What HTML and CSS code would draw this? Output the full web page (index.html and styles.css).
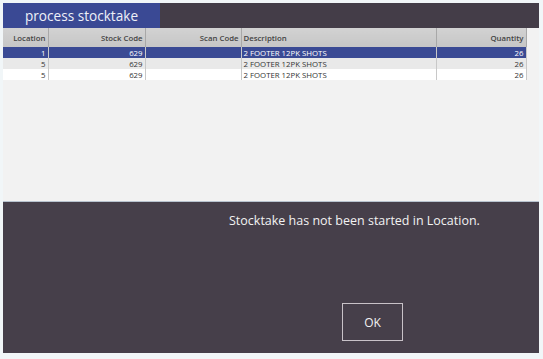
FILE: index.html
```html
<!DOCTYPE html>
<html lang="en">
<head>
    <meta charset="UTF-8">
    <meta name="viewport" content="width=device-width, initial-scale=1.0">
    <title>process stocktake</title>
    <link rel="stylesheet" href="styles.css">
</head>
<body>
    <div class="window">
        <div class="topbar">
            <div class="tab">process stocktake</div>
        </div>

        <div class="grid-area">
            <table class="grid">
                <colgroup>
                    <col class="c-loc">
                    <col class="c-stock">
                    <col class="c-scan">
                    <col class="c-desc">
                    <col class="c-qty">
                </colgroup>
                <thead>
                    <tr>
                        <th class="num">Location</th>
                        <th class="num">Stock Code</th>
                        <th class="num">Scan Code</th>
                        <th>Description</th>
                        <th class="num">Quantity</th>
                    </tr>
                </thead>
                <tbody>
                    <tr class="selected">
                        <td class="num">1</td>
                        <td class="num">629</td>
                        <td class="num"></td>
                        <td>2 FOOTER 12PK SHOTS</td>
                        <td class="num">26</td>
                    </tr>
                    <tr class="alt">
                        <td class="num">5</td>
                        <td class="num">629</td>
                        <td class="num"></td>
                        <td>2 FOOTER 12PK SHOTS</td>
                        <td class="num">26</td>
                    </tr>
                    <tr>
                        <td class="num">5</td>
                        <td class="num">629</td>
                        <td class="num"></td>
                        <td>2 FOOTER 12PK SHOTS</td>
                        <td class="num">26</td>
                    </tr>
                </tbody>
            </table>
        </div>

        <div class="dialog">
            <p class="message">Stocktake has not been started in Location.</p>
            <button class="ok-btn">OK</button>
        </div>
    </div>
</body>
</html>
```

FILE: styles.css
```css
body {
    margin: 0;
    padding: 3px;
    background-color: #f1f6f8;
    font-family: "Open Sans", "Noto Sans", sans-serif;
}
.window {
    width: 536px;
    height: 350px;
    display: flex;
    flex-direction: column;
}
.topbar {
    height: 25px;
    background-color: #443d48;
    display: flex;
}
.tab {
    width: 157px;
    background-color: #3a4994;
    color: #eef0f8;
    font-size: 13.6px;
    line-height: 25px;
    padding-left: 22px;
    box-sizing: border-box;
}
.grid-area {
    height: 173px;
    background-color: #f2f2f2;
    border-bottom: 1px solid #b8c3cf;
}
.grid {
    width: 523px;
    border-collapse: collapse;
    table-layout: fixed;
    font-size: 7.8px;
    color: #333;
    background: #fff;
}
.c-loc { width: 45px; }
.c-stock { width: 97px; }
.c-scan { width: 96px; }
.c-desc { width: 195px; }
.c-qty { width: 90px; }
.grid th {
    height: 19px;
    padding: 0 2px;
    font-weight: 600;
    color: #444;
    text-align: left;
    background: linear-gradient(#d2d2d2, #c6c6c6);
    border-right: 1px solid #a8a8a8;
}
.grid td {
    height: 11px;
    padding: 0 2px;
    line-height: 10px;
    border-right: 1px solid #c8c8c8;
    white-space: nowrap;
}
.grid .num {
    text-align: right;
}
.grid tr.selected td {
    background-color: #3a4a94;
    color: #fff;
}
.grid tr.alt td {
    background-color: #e9e9e9;
}
.dialog {
    flex: 1;
    background-color: #463f4a;
    position: relative;
}
.message {
    margin: 0;
    padding: 10px 0 0 226px;
    color: #f2f2f2;
    font-size: 12.5px;
    line-height: 18px;
}
.ok-btn {
    position: absolute;
    left: 339px;
    top: 101px;
    width: 61px;
    height: 38px;
    background: transparent;
    border: 1px solid #c8c2c8;
    color: #f2f2f2;
    font-family: inherit;
    font-size: 12px;
}
```
